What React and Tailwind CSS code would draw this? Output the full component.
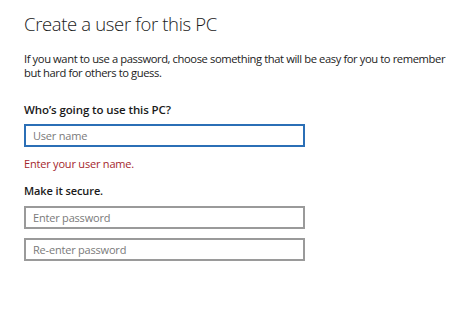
const Field = ({ placeholder, active }) => (
  <div
    className={`w-[281px] h-[23px] flex items-center px-[7px] border-2 bg-white ${
      active ? "border-[#2b6fb6]" : "border-[#9a9a9a]"
    }`}
  >
    <span className="text-[11px] leading-none tracking-[-0.2px] text-[#7a7a7a]">{placeholder}</span>
  </div>
);

export default function App() {
  return (
    <div
      className="w-[474px] h-[320px] bg-white text-[#1a1a1a] pl-6 pt-[11px]"
      style={{ fontFamily: '"Open Sans", "Noto Sans", sans-serif' }}
    >
      <h1 className="text-[18.5px] font-light leading-[26px] tracking-[-0.35px]">
        Create a user for this PC
      </h1>
      <p className="mt-[15px] text-[11.2px] leading-[14px] tracking-[-0.4px] w-[440px] text-[#222]">
        If you want to use a password, choose something that will be easy for you to remember
        but hard for others to guess.
      </p>
      <div className="mt-[23px] text-[11.5px] font-semibold leading-[14px] tracking-[-0.1px]">
        Who’s going to use this PC?
      </div>
      <div className="mt-[7px]">
        <Field placeholder="User name" active />
      </div>
      <div className="mt-[10px] text-[11px] leading-[14px] tracking-[-0.2px] text-[#a4262c]">
        Enter your user name.
      </div>
      <div className="mt-[13px] text-[11px] font-semibold leading-[14px] tracking-[-0.1px]">
        Make it secure.
      </div>
      <div className="mt-[8px] flex flex-col gap-[9px]">
        <Field placeholder="Enter password" />
        <Field placeholder="Re-enter password" />
      </div>
    </div>
  );
}
